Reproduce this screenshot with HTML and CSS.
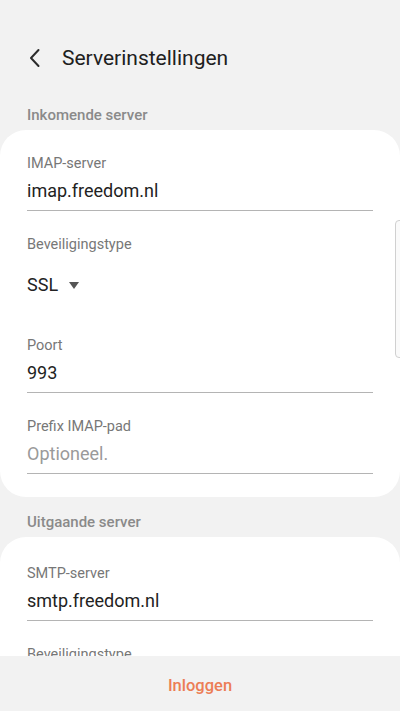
FILE: index.html
```html
<!DOCTYPE html>
<html lang="nl">
<head>
  <meta charset="UTF-8">
  <meta name="viewport" content="width=device-width, initial-scale=1.0">
  <title>Serverinstellingen</title>
  <link rel="stylesheet" href="styles.css">
</head>
<body>
  <div class="screen">
    <div class="header">
      <svg class="back" width="14" height="20" viewBox="0 0 14 20">
        <path d="M10.5 2 L3 10 L10.5 18" fill="none" stroke="#2b2b2b" stroke-width="2" stroke-linecap="round" stroke-linejoin="round"/>
      </svg>
      <div class="title">Serverinstellingen</div>
    </div>

    <div class="content">
      <div class="section-title">Inkomende server</div>
      <div class="card">
        <div class="field">
          <div class="label">IMAP-server</div>
          <div class="value">imap.freedom.nl</div>
        </div>
        <div class="field spinner">
          <div class="label">Beveiligingstype</div>
          <div class="select">SSL <span class="caret"></span></div>
        </div>
        <div class="field">
          <div class="label">Poort</div>
          <div class="value">993</div>
        </div>
        <div class="field">
          <div class="label">Prefix IMAP-pad</div>
          <div class="value placeholder">Optioneel.</div>
        </div>
      </div>

      <div class="section-title second">Uitgaande server</div>
      <div class="card second">
        <div class="field">
          <div class="label">SMTP-server</div>
          <div class="value">smtp.freedom.nl</div>
        </div>
        <div class="field spinner">
          <div class="label">Beveiligingstype</div>
          <div class="select">SSL <span class="caret"></span></div>
        </div>
      </div>
    </div>

    <div class="footer">
      <div class="login">Inloggen</div>
    </div>

    <div class="scrollbar"></div>
  </div>
</body>
</html>
```

FILE: styles.css
```css
body {
  margin: 0;
  padding: 0;
  font-family: Roboto, "Noto Sans", Arial, sans-serif;
  background-color: #f2f2f2;
}
.screen {
  position: relative;
  width: 400px;
  height: 711px;
  display: flex;
  flex-direction: column;
  overflow: hidden;
}
.header {
  display: flex;
  align-items: center;
  height: 56px;
  padding: 30px 0 0 28px;
  flex-shrink: 0;
}
.back {
  margin-right: 20px;
}
.title {
  font-size: 21px;
  color: #202020;
}
.content {
  flex: 1;
  overflow: hidden;
}
.section-title {
  font-size: 15px;
  font-weight: 500;
  line-height: 20px;
  color: #8a8a8a;
  padding: 19px 27px 0;
  margin-bottom: 5px;
}
.section-title.second {
  padding-top: 15px;
}
.card {
  background-color: #fff;
  border-radius: 26px;
  padding: 24px 27px 23px;
}
.card.second {
  padding-top: 27px;
}
.field {
  border-bottom: 1px solid #b4b4b4;
  padding-bottom: 6px;
  margin-bottom: 24px;
}
.field:last-child {
  margin-bottom: 0;
}
.label {
  font-size: 14.5px;
  line-height: 20px;
  color: #777;
}
.value {
  font-size: 18px;
  line-height: 26px;
  color: #222;
  margin-top: 4px;
}
.value.placeholder {
  color: #9a9a9a;
}
.field.spinner {
  border-bottom: none;
  padding-bottom: 0;
  margin-bottom: 37px;
}
.select {
  display: flex;
  align-items: center;
  font-size: 18px;
  line-height: 28px;
  color: #222;
  margin-top: 16px;
}
.caret {
  width: 0;
  height: 0;
  border-left: 5px solid transparent;
  border-right: 5px solid transparent;
  border-top: 7px solid #555;
  margin-left: 11px;
}
.footer {
  height: 55px;
  flex-shrink: 0;
  display: flex;
  align-items: center;
  justify-content: center;
  background-color: #f2f2f2;
}
.login {
  font-size: 16.5px;
  font-weight: 500;
  color: #ec7d55;
  padding-top: 3px;
}
.scrollbar {
  position: absolute;
  left: 395px;
  top: 220px;
  width: 8px;
  height: 136px;
  border: 1px solid #d0d0d0;
  border-radius: 4px;
  background-color: #fafafa;
}
```
